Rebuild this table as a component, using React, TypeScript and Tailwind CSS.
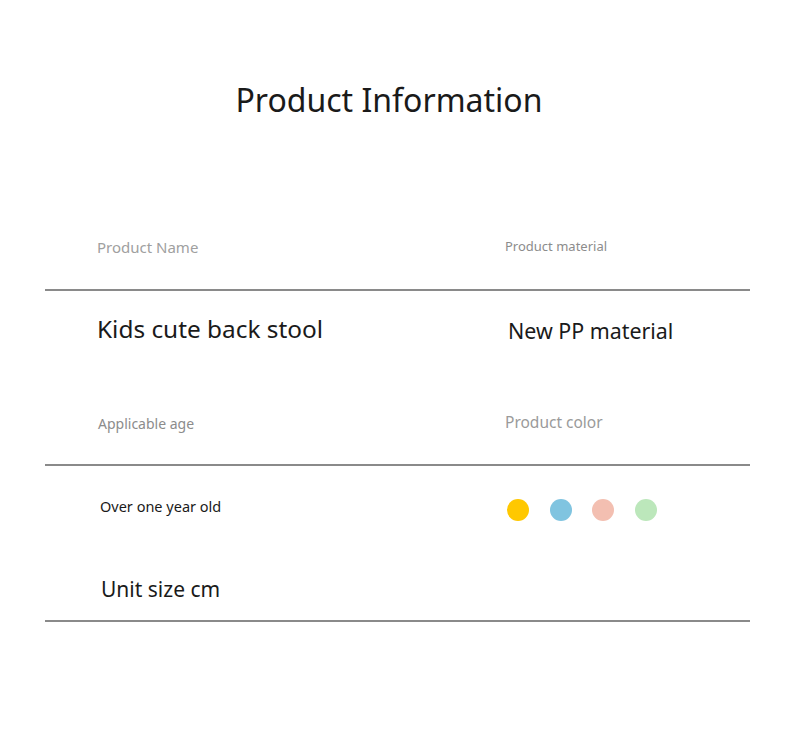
import React from "react";

const font = { fontFamily: '"Noto Sans", "Open Sans", sans-serif' };

export default function App() {
  return (
    <div className="w-[790px] h-[733px] bg-white" style={font}>
      <div className="pt-[80px] h-[120px] flex justify-center pr-[12px]">
        <h1 className="text-[32px] leading-[40px] text-[#1a1a1a] font-normal">Product Information</h1>
      </div>
      <div className="mx-[45px] w-[705px]">
        {/* row 1 labels */}
        <div className="mt-[112px] h-[30px] flex items-center">
          <div className="w-[460px] pl-[52px] text-[15px] text-[#a0a0a0]">Product Name</div>
          <div className="text-[13px] text-[#8c8c8c]">Product material</div>
        </div>
        <div className="mt-[27px] h-[2px] bg-[#8a8a8a]" />
        {/* row 1 values */}
        <div className="mt-[22px] h-[34px] flex items-center">
          <div className="w-[460px] pl-[52px] text-[24.4px] text-[#1a1a1a] -mt-[2px]">Kids cute back stool</div>
          <div className="pl-[3px] pt-[3px] text-[21.4px] text-[#1a1a1a]">New PP material</div>
        </div>
        {/* row 2 labels */}
        <div className="mt-[62px] h-[28px] flex items-center">
          <div className="w-[460px] pl-[53px] text-[14px] text-[#8c8c8c]">Applicable age</div>
          <div className="text-[15.5px] text-[#9a9a9a]">Product color</div>
        </div>
        <div className="mt-[27px] h-[2px] bg-[#8a8a8a]" />
        {/* row 2 values */}
        <div className="mt-[29px] h-[30px] flex items-center">
          <div className="w-[460px] pl-[55px] text-[14.5px] text-[#1a1a1a] -mt-[7px]">Over one year old</div>
          <div className="flex items-center gap-[20.5px] pl-[2px]">
            <span className="w-[22px] h-[22px] rounded-full bg-[#FFC800]" />
            <span className="w-[22px] h-[22px] rounded-full bg-[#80C4E0]" />
            <span className="w-[22px] h-[22px] rounded-full bg-[#F3BFB1]" />
            <span className="w-[22px] h-[22px] rounded-full bg-[#BCE7BB]" />
          </div>
        </div>
        {/* unit size */}
        <div className="mt-[50px] h-[30px] flex items-center">
          <div className="pl-[56px] text-[21px] text-[#1a1a1a]">Unit size cm</div>
        </div>
        <div className="mt-[15px] h-[2px] bg-[#8a8a8a]" />
      </div>
    </div>
  );
}
